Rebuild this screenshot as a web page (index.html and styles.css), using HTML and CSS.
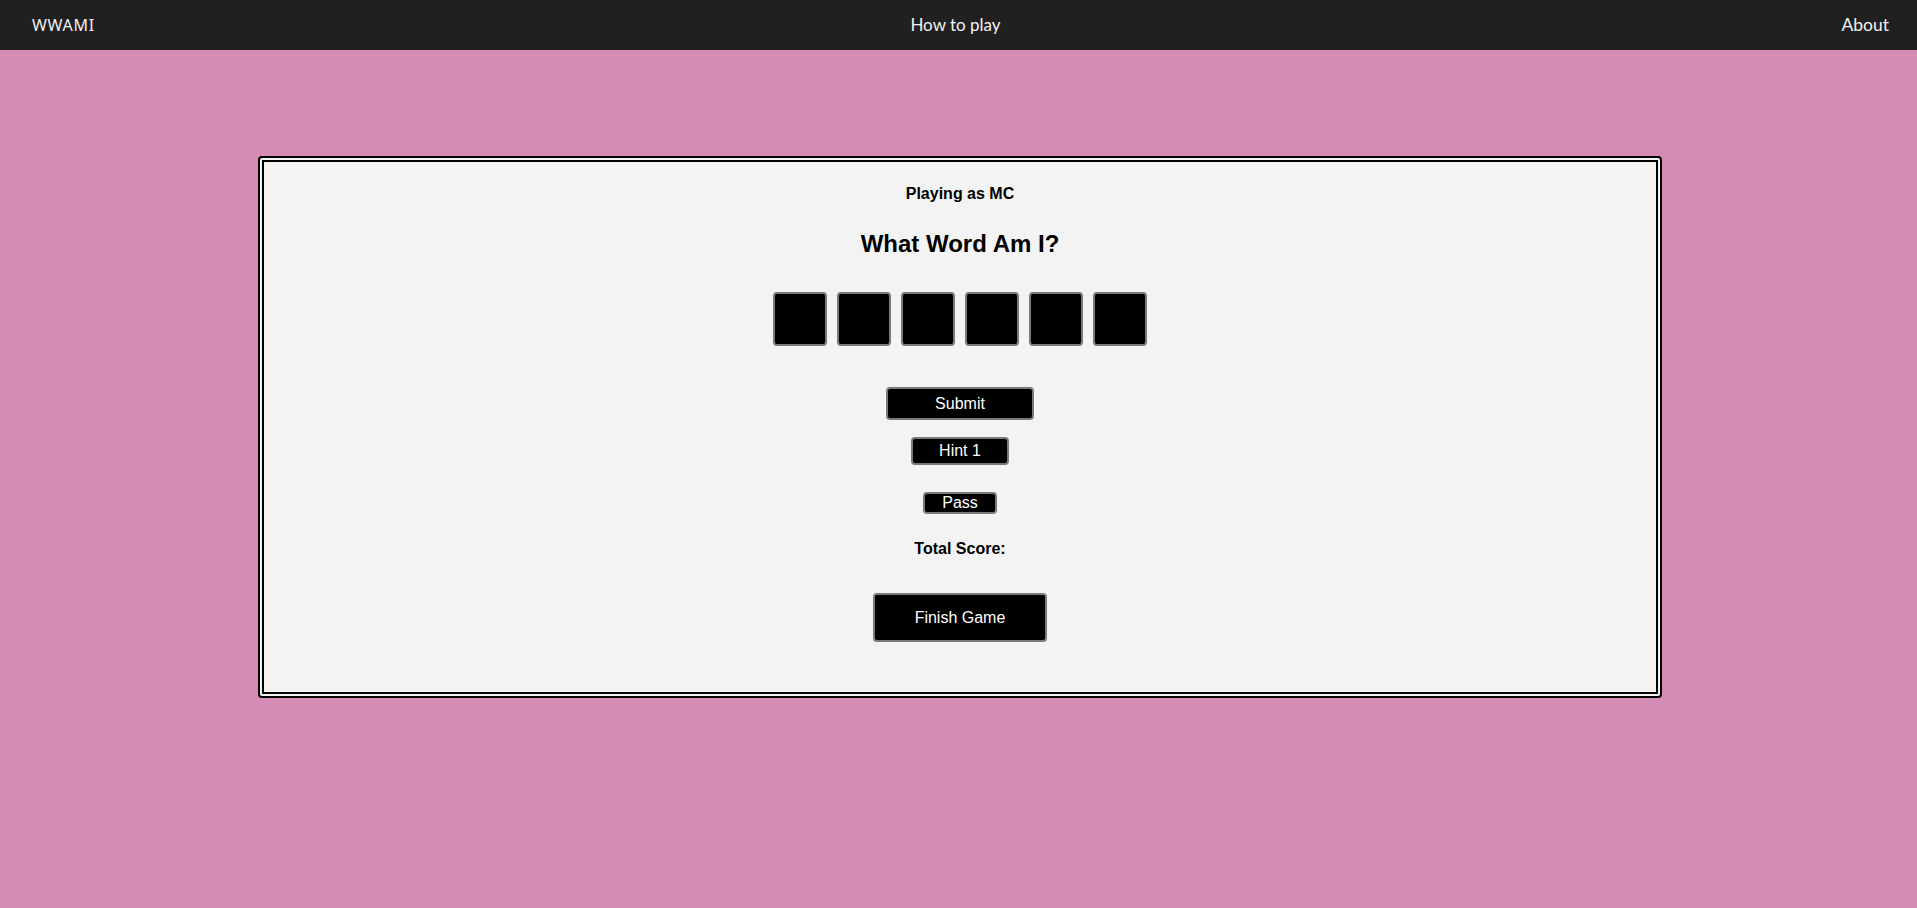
FILE: index.html
```html
<!DOCTYPE html>
<html lang="en">
<head>
<meta charset="utf-8">
<title>WWAMI</title>
<link rel="stylesheet" href="styles.css">
</head>
<body>
<nav class="navbar">
  <a class="brand" href="#">WWAMI</a>
  <a class="nav-link center" href="#">How to play</a>
  <a class="nav-link right" href="#">About</a>
</nav>
<main class="stage">
  <section class="card">
    <p class="player">Playing as MC</p>
    <h2 class="title">What Word Am I?</h2>
    <div class="letters">
      <input class="letter" type="text" maxlength="1">
      <input class="letter" type="text" maxlength="1">
      <input class="letter" type="text" maxlength="1">
      <input class="letter" type="text" maxlength="1">
      <input class="letter" type="text" maxlength="1">
      <input class="letter" type="text" maxlength="1">
    </div>
    <button class="btn btn-submit">Submit</button>
    <button class="btn btn-hint">Hint 1</button>
    <button class="btn btn-pass">Pass</button>
    <p class="score">Total Score:</p>
    <button class="btn btn-finish">Finish Game</button>
  </section>
</main>
</body>
</html>
```

FILE: styles.css
```css
* { box-sizing: border-box; }
html, body {
  margin: 0;
  padding: 0;
}
body {
  background: #d48bb4;
  min-height: 908px;
  font-family: "Liberation Sans", Arial, sans-serif;
}
.navbar {
  height: 50px;
  background: #202020;
  display: grid;
  grid-template-columns: 1fr auto 1fr;
  align-items: center;
  padding: 0 28px 0 32px;
}
.navbar a {
  color: #f2f2f2;
  text-decoration: none;
  font-family: "Lato", "Noto Sans", sans-serif;
  font-size: 17.5px;
  line-height: 20px;
}
.brand {
  font-family: "Noto Sans", sans-serif !important;
  font-size: 16px !important;
  letter-spacing: 0.7px;
  justify-self: start;
}
.nav-link.center {
  justify-self: center;
  margin-right: 10px;
  font-size: 17px !important;
}
.nav-link.right {
  justify-self: end;
}
.stage {
  display: flex;
  justify-content: center;
  padding-top: 106px;
  padding-left: 3px;
}
.card {
  width: 1404px;
  height: 542px;
  background: #f3f3f3;
  border: 6px double #000;
  border-radius: 4px;
  display: flex;
  flex-direction: column;
  align-items: center;
  padding-top: 23px;
}
.player {
  margin: 0;
  font-size: 16px;
  font-weight: bold;
  line-height: 18px;
  color: #000;
}
.title {
  margin: 27px 0 0;
  font-size: 24px;
  line-height: 28px;
  font-weight: bold;
  color: #000;
}
.letters {
  display: flex;
  gap: 10px;
  margin-top: 34px;
}
.letter {
  width: 54px;
  height: 54px;
  background: #000;
  border: 2px solid #7a7a7a;
  border-radius: 4px;
  color: #fff;
  font-size: 24px;
  text-align: center;
  padding: 0;
}
.btn {
  display: block;
  background: #000;
  color: #fff;
  border: 2px solid #7a7a7a;
  border-radius: 4px;
  font-family: "Liberation Sans", Arial, sans-serif;
  font-size: 16px;
  padding: 0;
  cursor: pointer;
}
.btn-submit {
  width: 148px;
  height: 33px;
  margin-top: 41px;
}
.btn-hint {
  width: 98px;
  height: 28px;
  margin-top: 17px;
}
.btn-pass {
  width: 74px;
  height: 22px;
  margin-top: 27px;
  line-height: 16px;
}
.score {
  margin: 26px 0 0;
  font-size: 16px;
  font-weight: bold;
  line-height: 18px;
  color: #000;
}
.btn-finish {
  width: 174px;
  height: 49px;
  margin-top: 35px;
}
```
